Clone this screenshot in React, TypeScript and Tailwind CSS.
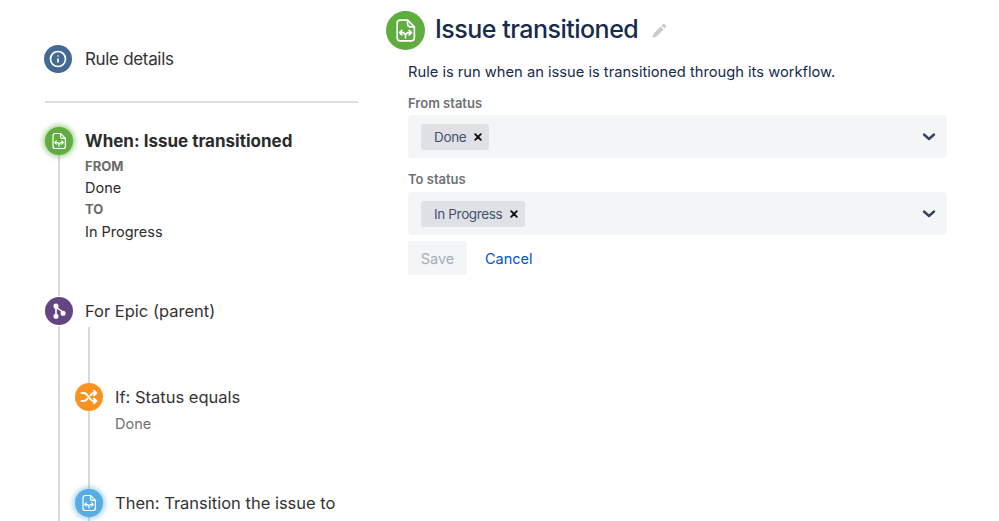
import { Info } from "lucide-react";

function TriggerIcon({ className }: { className: string }) {
  return (
    <svg className={className} viewBox="0 0 24 24" fill="none" stroke="currentColor" strokeWidth={1.6} strokeLinecap="round" strokeLinejoin="round">
      <path d="M7 2h7l6.500 6.500v10.500a3 3 0 0 1-3 3H7a3 3 0 0 1-3-3V5a3 3 0 0 1 3-3z" />
      <path d="M14 2v3.500a3 3 0 0 0 3 3h3.500" />
      <path d="M8.500 11.800l-2.200 2.200 2.200 2.200M15.500 11.800l2.200 2.200-2.200 2.200M6.500 14h3.500l2 2 2-2h3.500M12 16v3" />
    </svg>
  );
}

function BranchIcon() {
  return (
    <svg className="w-[18px] h-[18px] text-white" viewBox="0 0 24 24" fill="none" stroke="currentColor" strokeWidth={2.2} strokeLinecap="round">
      <circle cx="8" cy="5.500" r="2.300" fill="currentColor" />
      <circle cx="8" cy="19" r="2.300" fill="currentColor" />
      <circle cx="17.500" cy="15" r="2.300" fill="currentColor" />
      <path d="M8 6v13M8.500 6.500c1 3.500 8 4 9 8.500" />
    </svg>
  );
}

function ShuffleIcon() {
  return (
    <svg className="w-[18px] h-[18px] text-white" viewBox="0 0 18 18" fill="none" stroke="currentColor" strokeWidth={2} strokeLinecap="round" strokeLinejoin="round">
      <path d="M1.500 5h2.500c4 0 5.500 8 9.500 8h2.500M1.500 13h2.500c1.500 0 2.500-1 3.300-2.300M10.500 7.300c.8-1.300 1.800-2.300 3-2.300h2.500" />
      <path d="M14 2.800l2.300 2.200-2.300 2.200M14 10.800l2.300 2.200-2.300 2.200" />
    </svg>
  );
}

function Chevron() {
  return (
    <svg className="w-[14px] h-[10px] text-[#344563]" viewBox="0 0 14 10" fill="none" stroke="currentColor" strokeWidth={2.4} strokeLinecap="round" strokeLinejoin="round">
      <path d="M2 2.500l5 4.500 5-4.500" />
    </svg>
  );
}

function Remove() {
  return (
    <svg className="w-[8px] h-[8px] text-[#111111]" viewBox="0 0 8 8" fill="none" stroke="currentColor" strokeWidth={1.9} strokeLinecap="round">
      <path d="M1.200 1.200l5.600 5.600M6.800 1.200l-5.600 5.600" />
    </svg>
  );
}

function Pencil() {
  return (
    <svg className="w-[16px] h-[16px] text-[#c8cacf]" viewBox="0 0 16 16" fill="currentColor">
      <path d="M11.800 1.200a1.300 1.300 0 0 1 1.800 0l1.200 1.200a1.300 1.300 0 0 1 0 1.800l-1.300 1.300-3-3zM9.600 3.400l3 3-7.400 7.300-3.800 1.100 1-3.900z" />
    </svg>
  );
}

function StatusField({ label, value, gapClass }: { label: string; value: string; gapClass: string }) {
  return (
    <div>
      <div className="text-[13px] leading-[16px] font-semibold text-[#6f7276]">{label}</div>
      <div className={`${gapClass} h-[43px] w-[539px] rounded-[4px] bg-[#f4f5f7] pl-[13px] pr-[11px] flex items-center justify-between`}>
        <div className="h-[26px] rounded-[3px] bg-[#dfe1e6] pl-[13px] pr-[7px] flex items-center gap-[8px]">
          <span className="pt-[1px] text-[13.500px] tracking-[-0.35px] text-[#42526e]">{value}</span>
          <Remove />
        </div>
        <Chevron />
      </div>
    </div>
  );
}

export default function App() {
  return (
    <div className="h-[521px] w-[999px] overflow-hidden bg-white flex text-[#253858] font-['Inter','Liberation_Sans',sans-serif]">
      <div className="w-[313px] ml-[45px] shrink-0">
        <div className="mt-[45px] h-[28px] flex items-center gap-[13px] -ml-[1px]">
          <div className="w-[28px] h-[28px] rounded-full bg-[#456a92] flex items-center justify-center">
            <Info className="w-[18px] h-[18px] text-white" strokeWidth={2.2} />
          </div>
          <span className="pt-[2px] text-[17px] tracking-[-0.33px] text-[#333333]">Rule details</span>
        </div>
        <div className="mt-[28px] h-[2px] bg-[#dcdde0]" />

        <div className="mt-[24px] ml-[13px] border-l-2 border-[#d8d9dc] h-[500px]">
          <div className="flex -ml-[15px] gap-[12px]">
            <div className="w-[28px] h-[28px] shrink-0 rounded-full bg-[#5fac3f] shadow-[0_0_5px_2px_rgba(95,172,63,0.55)] flex items-center justify-center">
              <TriggerIcon className="w-[18px] h-[18px] text-white" />
            </div>
            <div>
              <div className="h-[28px] leading-[28px] text-[17px] font-bold text-[#2c2c2c] whitespace-nowrap">When: Issue transitioned</div>
              <div className="mt-[1px] text-[13px] leading-[20px] font-bold text-[#6b6b6b]">FROM</div>
              <div className="mt-[1px] text-[14.500px] leading-[22px] text-[#2c2c2c]">Done</div>
              <div className="text-[13px] leading-[21px] font-bold text-[#6b6b6b]">TO</div>
              <div className="mt-[1px] text-[14.500px] leading-[22px] text-[#2c2c2c]">In Progress</div>
            </div>
          </div>

          <div className="mt-[53px] flex -ml-[15px] gap-[12px] items-center bg-white py-[1px] w-fit">
            <div className="w-[28px] h-[28px] shrink-0 rounded-full bg-[#644584] flex items-center justify-center">
              <BranchIcon />
            </div>
            <span className="text-[16.500px] text-[#333333]">For Epic (parent)</span>
          </div>

          <div className="mt-[1px] ml-[28px] border-l-2 border-[#d8d9dc] pt-[56px] h-[200px]">
            <div className="flex -ml-[15px] gap-[12px]">
              <div className="w-[28px] h-[28px] shrink-0 rounded-full bg-[#fb9220] flex items-center justify-center">
                <ShuffleIcon />
              </div>
              <div>
                <div className="h-[28px] leading-[28px] text-[16.500px] text-[#333333] whitespace-nowrap">If: Status equals</div>
                <div className="mt-[2px] text-[14.500px] leading-[22px] text-[#707070]">Done</div>
              </div>
            </div>
            <div className="mt-[54px] flex -ml-[15px] gap-[12px]">
              <div className="w-[28px] h-[28px] shrink-0 rounded-full bg-[#55ade4] shadow-[0_0_5px_2px_rgba(85,173,228,0.55)] flex items-center justify-center">
                <TriggerIcon className="w-[18px] h-[18px] text-white" />
              </div>
              <div className="h-[28px] leading-[28px] text-[16.500px] text-[#333333] whitespace-nowrap">Then: Transition the issue to</div>
            </div>
          </div>
        </div>
      </div>

      <div className="ml-[28px] pt-[11px]">
        <div className="flex items-center h-[39px]">
          <div className="w-[39px] h-[39px] rounded-full bg-[#5fac3f] flex items-center justify-center">
            <TriggerIcon className="w-[25px] h-[25px] text-white" />
          </div>
          <h1 className="ml-[10px] -mt-[2px] text-[25px] tracking-[-0.5px] font-medium text-[#172b4d] whitespace-nowrap">Issue transitioned</h1>
          <div className="ml-[13px]">
            <Pencil />
          </div>
        </div>
        <div className="ml-[22px]">
          <p className="mt-[11px] text-[14.700px] leading-[22px] text-[#172b4d] whitespace-nowrap">Rule is run when an issue is transitioned through its workflow.</p>
          <div className="mt-[12px]">
            <StatusField label="From status" value="Done" gapClass="mt-[4px]" />
          </div>
          <div className="mt-[13px]">
            <StatusField label="To status" value="In Progress" gapClass="mt-[5px]" />
          </div>
          <div className="mt-[6px] flex items-center gap-[18px]">
            <button className="w-[59px] h-[34px] pt-[1px] rounded-[3px] bg-[#f4f5f7] text-[14.500px] text-[#a5adba]">Save</button>
            <a className="pt-[1px] text-[14.500px] text-[#0052cc]">Cancel</a>
          </div>
        </div>
      </div>
    </div>
  );
}
